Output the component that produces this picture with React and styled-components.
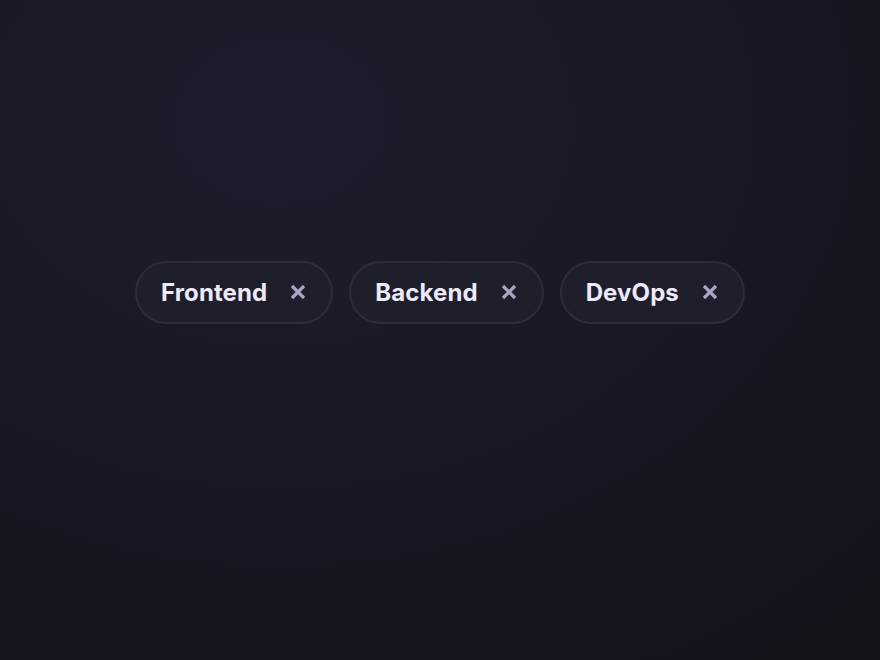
import React from "react";
import styled, { createGlobalStyle } from "styled-components";

const Global = createGlobalStyle`
  html, body { margin: 0; padding: 0; }
  body {
    background: #15151e;
    font-family: Inter, "Noto Sans", "Liberation Sans", sans-serif;
  }
`;

const Stage = styled.main`
  box-sizing: border-box;
  width: 100%;
  min-height: 660px;
  padding-top: 261px;
  display: flex;
  justify-content: center;
  align-items: flex-start;
  background: radial-gradient(
    ellipse 900px 700px at 280px 120px,
    #1e1d2e 0%,
    #1a1a27 35%,
    #16161f 70%,
    #13131a 100%
  );
`;

const TagList = styled.ul`
  list-style: none;
  margin: 0;
  padding: 0;
  display: flex;
  gap: 16px;
`;

const Tag = styled.li`
  box-sizing: border-box;
  height: 63px;
  display: flex;
  align-items: center;
  gap: 23px;
  padding: 0 25px 0 24px;
  border: 2px solid #2d2c3b;
  border-radius: 999px;
  background: #1f1e2b;
`;

const Label = styled.span`
  color: #ece9fa;
  font-size: 24px;
  font-weight: 700;
  letter-spacing: 0.1px;
  line-height: 1;
`;

const Remove = styled.button`
  display: flex;
  align-items: center;
  justify-content: center;
  padding: 0;
  margin: 0 0 2px;
  border: 0;
  background: transparent;
  color: #a8a4c4;
  cursor: pointer;
  width: 16px;
  height: 16px;
`;

const XIcon = () => (
  <svg width="16" height="16" viewBox="0 0 16 16" fill="none">
    <path
      d="M2 2 L14 14 M14 2 L2 14"
      stroke="currentColor"
      strokeWidth="3.2"
      strokeLinecap="butt"
    />
  </svg>
);

const tags = ["Frontend", "Backend", "DevOps"];

export default function App() {
  return (
    <>
      <Global />
      <Stage>
        <TagList>
          {tags.map((t) => (
            <Tag key={t}>
              <Label>{t}</Label>
              <Remove aria-label={`Remove ${t}`}>
                <XIcon />
              </Remove>
            </Tag>
          ))}
        </TagList>
      </Stage>
    </>
  );
}
